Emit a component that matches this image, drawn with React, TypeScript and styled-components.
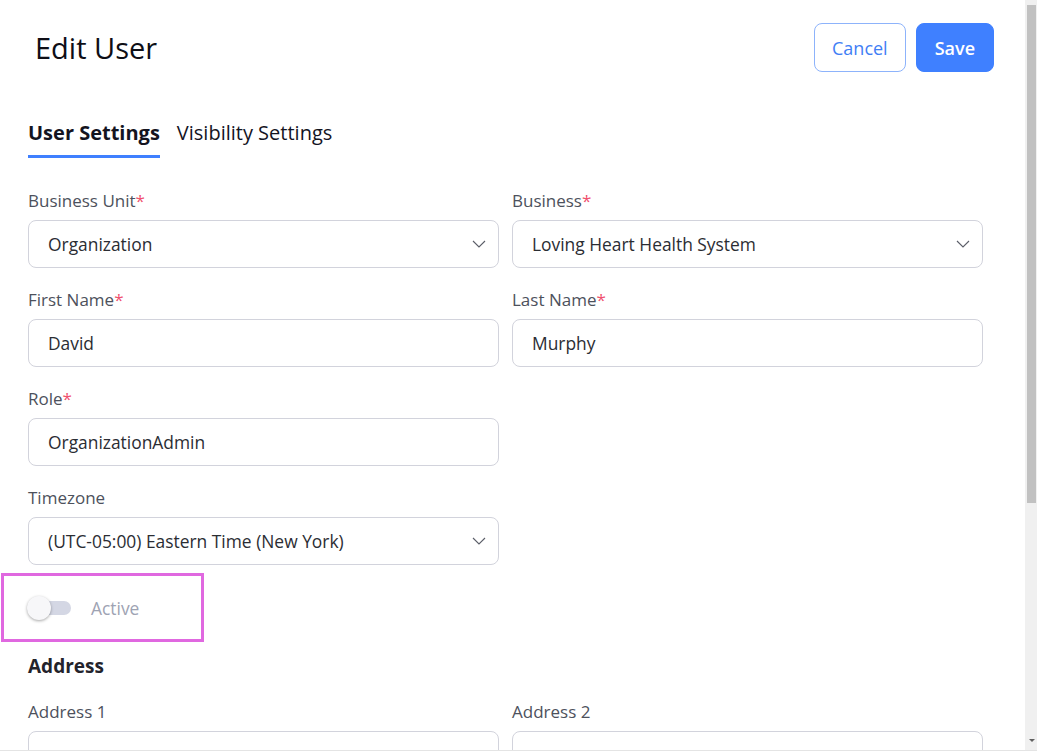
import React, { useState } from "react";
import styled, { createGlobalStyle } from "styled-components";

const GlobalStyle = createGlobalStyle`
	html, body {
		margin: 0;
		padding: 0;
		background: #ffffff;
		font-family: "Open Sans", "Noto Sans", sans-serif;
		overflow: hidden;
	}
	* {
		box-sizing: border-box;
	}
`;

const Frame = styled.div`
	display: flex;
	height: 751px;
	border-bottom: 1px solid #e4e4e4;
`;

const Viewport = styled.div`
	flex: 1;
	overflow: hidden;
`;

const Rail = styled.div`
	width: 12px;
	background: #f0f0f0;
	padding: 5px 1px 0 2px;
	display: flex;
	flex-direction: column;
	justify-content: space-between;
`;

const Thumb = styled.div`
	height: 498px;
	background: #c1c1c1;
`;

const RailArrow = styled.div`
	width: 0;
	height: 0;
	margin: 0 auto 8px;
	border-left: 3px solid transparent;
	border-right: 3px solid transparent;
	border-top: 3px solid #606060;
`;

const Header = styled.div`
	display: flex;
	align-items: center;
	justify-content: space-between;
	padding: 23px 31px 0 35px;
	height: 72px;
`;

const Title = styled.h1`
	margin: 0;
	font-size: 29px;
	font-weight: 500;
	color: #0e0e16;
	line-height: 49px;
`;

const Actions = styled.div`
	display: flex;
	gap: 10px;
`;

const Button = styled.button<{ primary?: boolean }>`
	height: 49px;
	padding: 0 ${(p) => (p.primary ? 18 : 17)}px;
	border-radius: 8px;
	font-family: "Open Sans", sans-serif;
	font-size: 18px;
	font-weight: ${(p) => (p.primary ? 600 : 400)};
	cursor: pointer;
	border: 1px solid ${(p) => (p.primary ? "#3f80ff" : "#8db3fb")};
	background: ${(p) => (p.primary ? "#3f80ff" : "#ffffff")};
	color: ${(p) => (p.primary ? "#ffffff" : "#3f7ef5")};
`;

const Tabs = styled.div`
	display: flex;
	gap: 17px;
	padding: 0 0 0 28px;
	margin-top: 47px;
`;

const Tab = styled.div<{ active?: boolean }>`
	font-size: 20px;
	font-weight: ${(p) => (p.active ? 700 : 400)};
	color: #14141f;
	padding-bottom: 9px;
	line-height: 27px;
	cursor: pointer;
	border-bottom: 3px solid ${(p) => (p.active ? "#3f80ff" : "transparent")};
`;

const Form = styled.div`
	padding: 31px 43px 0 28px;
`;

const Grid = styled.div`
	display: grid;
	grid-template-columns: 471px 471px;
	column-gap: 13px;
`;

const Field = styled.div`
	display: flex;
	flex-direction: column;
	margin-bottom: 20px;
`;

const Label = styled.label`
	font-size: 17px;
	line-height: 24px;
	color: #4d515c;
	margin-bottom: 7px;
`;

const Req = styled.span`
	color: #f0506e;
`;

const Box = styled.div`
	height: 48px;
	border: 1px solid #d2d3dc;
	border-radius: 8px;
	display: flex;
	align-items: center;
	justify-content: space-between;
	padding: 0 10px 0 19px;
	font-size: 17.4px;
	color: #2b2d33;
`;

const Chevron = styled.svg`
	width: 18px;
	height: 18px;
	color: #5b5e68;
`;

const ToggleBox = styled.div`
	margin: -12px 0 0 -27px;
	width: 203px;
	height: 69px;
	border: 3px solid #e068e0;
	display: flex;
	align-items: center;
	padding-left: 23px;
	gap: 20px;
`;

const Track = styled.div`
	position: relative;
	width: 44px;
	height: 14px;
	border-radius: 7px;
	background: #d4d7e4;
`;

const Knob = styled.div`
	position: absolute;
	left: 0;
	top: -5px;
	width: 24px;
	height: 24px;
	border-radius: 50%;
	background: #f7f7f9;
	box-shadow: 0 1px 3px rgba(0, 0, 0, 0.35);
`;

const ToggleLabel = styled.span`
	font-size: 17.4px;
	color: #9ea3b3;
`;

const Section = styled.h2`
	margin: 12px 0 22px;
	font-size: 19px;
	font-weight: 700;
	color: #23232b;
	line-height: 24px;
`;

function Select({ value }: { value: string }) {
	return (
		<Box>
			<span>{value}</span>
			<Chevron viewBox="0 0 24 24" fill="none" stroke="currentColor" strokeWidth="1.5">
				<path d="M4 8l8 8 8-8" />
			</Chevron>
		</Box>
	);
}

function FieldBlock({
	label,
	required,
	children,
}: {
	label: string;
	required?: boolean;
	children?: React.ReactNode;
}) {
	return (
		<Field>
			<Label>
				{label}
				{required && <Req>*</Req>}
			</Label>
			{children}
		</Field>
	);
}

export default function App() {
	const [tab, setTab] = useState("user");

	return (
		<>
			<GlobalStyle />
			<Frame>
				<Viewport>
					<Header>
						<Title>Edit User</Title>
						<Actions>
							<Button>Cancel</Button>
							<Button primary>Save</Button>
						</Actions>
					</Header>
					<Tabs>
						<Tab active={tab === "user"} onClick={() => setTab("user")}>
							User Settings
						</Tab>
						<Tab active={tab === "visibility"} onClick={() => setTab("visibility")}>
							Visibility Settings
						</Tab>
					</Tabs>
					<Form>
						<Grid>
							<FieldBlock label="Business Unit" required>
								<Select value="Organization" />
							</FieldBlock>
							<FieldBlock label="Business" required>
								<Select value="Loving Heart Health System" />
							</FieldBlock>
							<FieldBlock label="First Name" required>
								<Box>David</Box>
							</FieldBlock>
							<FieldBlock label="Last Name" required>
								<Box>Murphy</Box>
							</FieldBlock>
							<FieldBlock label="Role" required>
								<Box>OrganizationAdmin</Box>
							</FieldBlock>
							<div />
							<FieldBlock label="Timezone">
								<Select value="(UTC-05:00) Eastern Time (New York)" />
							</FieldBlock>
							<div />
						</Grid>
						<ToggleBox>
							<Track>
								<Knob />
							</Track>
							<ToggleLabel>Active</ToggleLabel>
						</ToggleBox>
						<Section>Address</Section>
						<Grid>
							<FieldBlock label="Address 1">
								<Box />
							</FieldBlock>
							<FieldBlock label="Address 2">
								<Box />
							</FieldBlock>
						</Grid>
					</Form>
				</Viewport>
				<Rail>
					<Thumb />
					<RailArrow />
				</Rail>
			</Frame>
		</>
	);
}
